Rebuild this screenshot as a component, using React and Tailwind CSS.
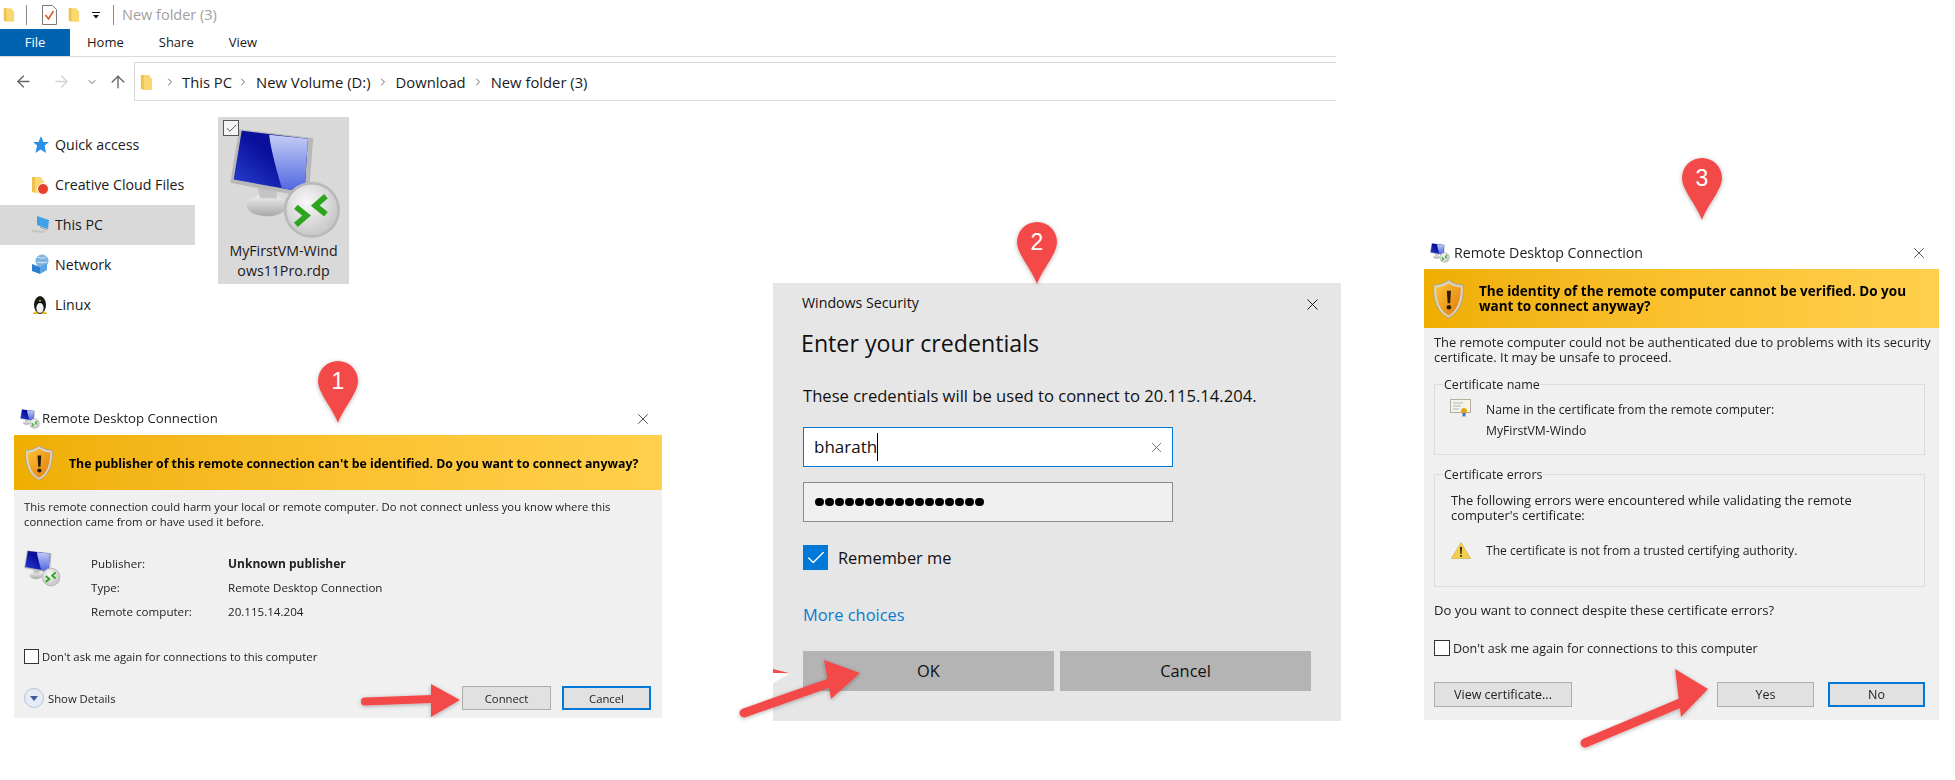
import { X, Check, ArrowLeft, ArrowRight, ArrowUp, ChevronDown, ChevronRight } from 'lucide-react';

function Folder({ className }) {
  return (
    <svg className={className} viewBox="0 0 14 18">
      <path d="M1 1h8l2 1v2l2 .5V17H4l-3-1z" fill="#f9d872" />
      <path d="M1 1h3v15H1z" fill="#eec14e" />
    </svg>
  );
}

// remote desktop icon, used big on the file tile and small in the dialogs
function RdpIcon({ className, id }) {
  return (
    <svg className={className} viewBox="95 80 335 335">
      <defs>
        <linearGradient id={`${id}-s`} x1="0" y1="1" x2="1" y2="0">
          <stop offset="0" stopColor="#2a44d4" />
          <stop offset="0.55" stopColor="#0a0f9c" />
          <stop offset="1" stopColor="#0a0f9c" />
        </linearGradient>
        <linearGradient id={`${id}-h`} x1="0" y1="0" x2="0" y2="1">
          <stop offset="0" stopColor="#c3cdf6" />
          <stop offset="1" stopColor="#4e63e0" />
        </linearGradient>
        <radialGradient id={`${id}-b`} cx="0.4" cy="0.35" r="0.8">
          <stop offset="0" stopColor="#f9f9f9" />
          <stop offset="1" stopColor="#bdbdbd" />
        </radialGradient>
        <linearGradient id={`${id}-st`} x1="0" y1="0" x2="0" y2="1">
          <stop offset="0" stopColor="#efefef" />
          <stop offset="1" stopColor="#a8a8a8" />
        </linearGradient>
      </defs>
      <ellipse cx="205" cy="312" rx="60" ry="32" fill={`url(#${id}-st)`} />
      <path d="M175 250l60 8 0 32-50 0z" fill="#c4c4c4" />
      <path d="M122 84l222 26-14 178-234-44z" fill="#b8b8b8" />
      <path d="M130 88l198 24-10 160-212-38z" fill={`url(#${id}-s)`} />
      <path d="M212 100l116 12-10 160-68-12c-14-50-32-110-38-160z" fill={`url(#${id}-h)`} />
      <circle cx="340" cy="325" r="84" fill="#b9b9b9" />
      <circle cx="340" cy="325" r="76" fill={`url(#${id}-b)`} />
      <path d="M292 316l32 26-32 28" fill="none" stroke="#2ea51f" strokeWidth="17" />
      <path d="M382 284l-32 28 32 26" fill="none" stroke="#2ea51f" strokeWidth="17" />
    </svg>
  );
}

function Shield({ className, id }) {
  return (
    <svg className={className} viewBox="0 0 40 48">
      <defs>
        <linearGradient id={id} x1="0" y1="0" x2="1" y2="1">
          <stop offset="0" stopColor="#ffc436" />
          <stop offset="1" stopColor="#e07a0c" />
        </linearGradient>
      </defs>
      <path d="M20 1C15 5 8 7 2 7c-1 18 4 33 18 40 14-7 19-22 18-40-6 0-13-2-18-6z" fill="#d9d3c2" stroke="#a59a80" />
      <path d="M20 5C16 8 10 10 5 10c0 15 4 28 15 34 11-6 15-19 15-34-5 0-11-2-15-5z" fill={`url(#${id})`} />
      <path d="M18 14h5l-1 15h-3z" fill="#2b1a05" />
      <circle cx="20.5" cy="34" r="2.8" fill="#2b1a05" />
    </svg>
  );
}

function CertIcon() {
  return (
    <svg className="w-[21px] h-[18px]" viewBox="0 0 21 18">
      <rect x="0.5" y="0.5" width="20" height="13" fill="#f7f3e6" stroke="#b3ae9f" />
      <path d="M3 4h10M3 7h8M3 10h6" stroke="#a9b6c9" />
      <circle cx="14" cy="12" r="3" fill="#e5a416" />
      <path d="M12.5 14v4l1.5-1 1.5 1v-4" fill="#3b74c9" />
    </svg>
  );
}

function WarnIcon() {
  return (
    <svg className="w-[20px] h-[17px]" viewBox="0 0 20 17">
      <path d="M10 .5L19.5 16.5H.5z" fill="#f3cf4a" stroke="#c9a83a" strokeWidth="0.6" />
      <path d="M9 5h2l-.4 7H9.4z" fill="#222" />
      <circle cx="10" cy="14" r="1" fill="#222" />
    </svg>
  );
}

function DlgButton({ label, primary, className }) {
  return (
    <div className={`flex items-center justify-center bg-[#e1e1e1] ${primary ? 'border-2 border-[#0078d7]' : 'border border-[#adadad]'} ${className}`}>
      {label}
    </div>
  );
}

const navItems = [
  { label: 'Quick access', icon: (
    <svg className="w-[18px] h-[18px]" viewBox="0 0 18 18"><path d="M10 0l2.4 6H18l-4.4 3.6L15 17l-5.4-3.6L4.5 17l1.6-7.4L2 6h5.6z" fill="#2b8fe3" /></svg>
  ) },
  { label: 'Creative Cloud Files', icon: (
    <div className="relative w-[18px] h-[20px]">
      <Folder className="w-[14px] h-[20px]" />
      <div className="absolute right-0 bottom-0 w-[12px] h-[12px] rounded-full bg-[#e8402f] border border-white" />
    </div>
  ) },
  { label: 'This PC', active: true, icon: (
    <svg className="w-[20px] h-[20px]" viewBox="0 0 20 20">
      <path d="M6 1l12 4-1 9-11-4z" fill="#3fa2e8" />
      <path d="M1 16l13 1" stroke="#c4c4c4" strokeWidth="2" />
      <path d="M9 12l7 3" stroke="#9a9a9a" />
    </svg>
  ) },
  { label: 'Network', icon: (
    <svg className="w-[20px] h-[22px]" viewBox="0 0 20 22">
      <circle cx="11" cy="7" r="6.5" fill="#7fb2dc" />
      <path d="M7 3c3 2 6 1 8 0M6 8c4 1 7 1 10 0" stroke="#e3eef7" fill="none" />
      <path d="M1 10l8 3v7l-8-3z" fill="#2b7fd1" />
      <path d="M9 13l7-4v7l-7 4z" fill="#5aa5e6" />
    </svg>
  ) },
  { label: 'Linux', icon: (
    <svg className="w-[18px] h-[20px]" viewBox="0 0 18 20">
      <ellipse cx="9" cy="10" rx="6" ry="9" fill="#1a1a1a" />
      <ellipse cx="9" cy="13" rx="3.6" ry="5" fill="#f4f4f4" />
      <path d="M7.5 5h3L9 7z" fill="#e8b320" />
      <path d="M2 18l4-2 1 3H2zM16 18l-4-2-1 3h5z" fill="#e8b320" />
    </svg>
  ) },
];

function Explorer() {
  return (
    <div className="w-[1336px] text-[#1a1a1a]">
      <div className="h-[29px] flex items-center">
        <Folder className="ml-[3px] w-[12px] h-[18px]" />
        <div className="ml-[11px] w-px h-[20px] bg-[#8a8a8a]" />
        <svg className="ml-[15px] w-[15px] h-[20px]" viewBox="0 0 15 20">
          <path d="M.5.5h10l4 4v15H.5z" fill="#fff" stroke="#7a7a7a" />
          <path d="M3.5 10l3 4 5-8" stroke="#d9541e" strokeWidth="1.5" fill="none" />
        </svg>
        <Folder className="ml-[11px] w-[12px] h-[18px]" />
        <svg className="ml-[12px] w-[8px] h-[8px]" viewBox="0 0 8 8">
          <path d="M0 1h8v1H0zM1 4h6L4 7.5z" fill="#111" />
        </svg>
        <div className="ml-[13px] w-px h-[20px] bg-[#8a8a8a]" />
        <span className="ml-[8px] text-[14.5px] text-[#a0a0a0]">New folder (3)</span>
      </div>
      <div className="h-[28px] flex items-stretch border-b border-[#dadbdc] text-[13px]">
        <div className="w-[70px] bg-[#0063b1] text-white flex items-center justify-center">File</div>
        <div className="ml-[17px] flex items-center">Home</div>
        <div className="ml-[35px] flex items-center">Share</div>
        <div className="ml-[35px] flex items-center">View</div>
      </div>
      <div className="h-[52px] pt-[5px] flex items-start">
        <div className="w-[134px] h-[39px] flex items-center text-[#666]">
          <ArrowLeft className="ml-[14px] w-[19px] h-[19px]" strokeWidth={1.6} />
          <ArrowRight className="ml-[19px] w-[19px] h-[19px] text-[#d4d4d4]" strokeWidth={1.6} />
          <ChevronDown className="ml-[15px] w-[12px] h-[12px]" strokeWidth={2} />
          <ArrowUp className="ml-[10px] w-[20px] h-[20px]" strokeWidth={1.6} />
        </div>
        <div className="flex-1 h-[39px] pt-[1px] border border-r-0 border-[#d9d9d9] flex items-center pl-[5px] text-[14.8px]">
          <Folder className="w-[13px] h-[19px]" />
          <ChevronRight className="ml-[11px] w-[12px] h-[12px] text-[#666]" />
          <span className="ml-[6px]">This PC</span>
          <ChevronRight className="ml-[5px] w-[12px] h-[12px] text-[#666]" />
          <span className="ml-[7px]">New Volume (D:)</span>
          <ChevronRight className="ml-[6px] w-[12px] h-[12px] text-[#666]" />
          <span className="ml-[7px]">Download</span>
          <ChevronRight className="ml-[6px] w-[12px] h-[12px] text-[#666]" />
          <span className="ml-[7px]">New folder (3)</span>
        </div>
      </div>
      <div className="flex">
        <div className="w-[195px] pt-[16px] text-[14.2px]">
          {navItems.map(item => (
            <div key={item.label} className={`h-[40px] flex items-center ${item.active ? 'bg-[#d9d9d9]' : ''}`}>
              <div className="w-[55px] pl-[31px] flex items-center">{item.icon}</div>
              <span>{item.label}</span>
            </div>
          ))}
        </div>
        <div className="ml-[23px] mt-[8px] relative w-[131px] h-[167px] bg-[#d9d9d9] flex flex-col items-center text-[14.2px] leading-[20px]">
          <RdpIcon className="mt-[11px] ml-[5px] w-[112px] h-[112px]" id="rdp-big" />
          <div className="absolute left-[5px] top-[3px] w-[16px] h-[16px] border border-[#555] bg-white/70 flex items-center justify-center">
            <Check className="w-[13px] h-[13px] text-[#333]" strokeWidth={1.5} />
          </div>
          <div className="text-center mt-[1px]">MyFirstVM-Wind<br />ows11Pro.rdp</div>
        </div>
      </div>
    </div>
  );
}

function PublisherDialog() {
  return (
    <div className="absolute left-[14px] top-[402px] w-[648px] text-[11.3px] text-[#222] blur-[0.4px]">
      <div className="h-[33px] bg-white flex items-center">
        <RdpIcon className="ml-[6px] w-[20px] h-[20px]" id="rdp-t1" />
        <span className="ml-[2px] text-[13.2px]">Remote Desktop Connection</span>
        <X className="ml-auto mr-[10px] w-[18px] h-[18px]" strokeWidth={1} />
      </div>
      <div className="h-[55px] bg-gradient-to-r from-[#efae00] via-[#fbc12e] to-[#ffd04d] flex items-center">
        <Shield className="ml-[10px] w-[30px] h-[38px]" id="sh1" />
        <span className="ml-[15px] pt-[3px] text-[12.3px] font-bold text-black whitespace-nowrap">The publisher of this remote connection can't be identified. Do you want to connect anyway?</span>
      </div>
      <div className="h-[228px] bg-[#f0f0f0] px-[10px] pt-[9px] leading-[15px]">
        <p>This remote connection could harm your local or remote computer. Do not connect unless you know where this<br />connection came from or have used it before.</p>
        <div className="mt-[23px] flex text-[11.6px]">
          <RdpIcon className="mt-[-2px] w-[37px] h-[37px]" id="rdp-m1" />
          <div className="ml-[30px] w-[137px] leading-[24px]">
            <div>Publisher:</div>
            <div>Type:</div>
            <div>Remote computer:</div>
          </div>
          <div className="leading-[24px]">
            <div className="font-bold text-[12px]">Unknown publisher</div>
            <div>Remote Desktop Connection</div>
            <div>20.115.14.204</div>
          </div>
        </div>
        <div className="mt-[24px] h-[16px] flex items-center">
          <div className="w-[15px] h-[15px] border border-[#333] bg-white" />
          <span className="ml-[3px]">Don't ask me again for connections to this computer</span>
        </div>
        <div className="mt-[22px] pr-[1px] flex items-center">
          <div className="w-[20px] h-[20px] rounded-full border border-[#b6c2d8] bg-[#e6ecf6] flex items-center justify-center">
            <div className="w-0 h-0 border-x-[4px] border-x-transparent border-t-[5px] border-t-[#3a5a98]" />
          </div>
          <span className="ml-[4px]">Show Details</span>
          <DlgButton label="Connect" className="ml-auto w-[89px] h-[24px]" />
          <DlgButton label="Cancel" primary className="ml-[11px] w-[89px] h-[24px]" />
        </div>
      </div>
    </div>
  );
}

function CredentialsDialog() {
  return (
    <div className="absolute left-[773px] top-[283px] w-[568px] h-[438px] bg-[#e6e6e6] pl-[30px] pr-[30px] text-[#111]">
      <X className="absolute right-[19px] top-[12px] w-[19px] h-[19px]" strokeWidth={1.2} />
      <div className="pt-[10px] ml-[-1px] text-[14.2px] leading-[20px]">Windows Security</div>
      <h2 className="mt-[14px] ml-[-2px] text-[23.2px] leading-[32px]">Enter your credentials</h2>
      <p className="mt-[25px] text-[16.6px] leading-[24px]">These credentials will be used to connect to 20.115.14.204.</p>
      <div className="mt-[19px] w-[370px] h-[40px] bg-white border border-[#0078d7] flex items-center pl-[10px] text-[17px]">
        <span>bharath</span>
        <div className="w-px h-[28px] bg-black" />
        <X className="ml-auto mr-[7px] w-[17px] h-[17px] text-[#444]" strokeWidth={1} />
      </div>
      <div className="mt-[15px] w-[370px] h-[40px] bg-[#f0f0f0] border border-[#8a8a8a] flex items-center pl-[11px]">
        {Array.from({ length: 17 }).map((_, i) => (
          <div key={i} className="w-[8.5px] h-[8.5px] rounded-full bg-black mr-[1.5px]" />
        ))}
      </div>
      <div className="mt-[23px] flex items-center">
        <div className="w-[25px] h-[25px] bg-[#0078d7] flex items-center justify-center">
          <Check className="w-[22px] h-[22px] text-white" strokeWidth={1.5} />
        </div>
        <span className="ml-[10px] pt-[1px] text-[16.4px]">Remember me</span>
      </div>
      <div className="mt-[32px] text-[16.4px] leading-[24px] text-[#0a7ad0]">More choices</div>
      <div className="mt-[24px] flex gap-[6px] text-[16.4px]">
        <div className="w-[251px] h-[40px] pt-[2px] bg-[#b4b4b4] flex items-center justify-center">OK</div>
        <div className="w-[251px] h-[40px] pt-[2px] bg-[#b4b4b4] flex items-center justify-center">Cancel</div>
      </div>
    </div>
  );
}

function CertificateDialog() {
  return (
    <div className="absolute left-[1424px] top-[236px] w-[515px] text-[12.5px] text-[#222] blur-[0.25px]">
      <div className="h-[33px] bg-white flex items-center">
        <RdpIcon className="ml-[6px] w-[20px] h-[20px]" id="rdp-t3" />
        <span className="ml-[4px] text-[14.2px]">Remote Desktop Connection</span>
        <X className="ml-auto mr-[11px] w-[18px] h-[18px]" strokeWidth={1} />
      </div>
      <div className="h-[59px] bg-gradient-to-r from-[#efae00] via-[#fbc12e] to-[#ffd04d] flex items-center">
        <Shield className="ml-[8px] w-[33px] h-[40px]" id="sh3" />
        <span className="ml-[14px] font-bold text-black leading-[15px] text-[13.5px]">The identity of the remote computer cannot be verified. Do you<br />want to connect anyway?</span>
      </div>
      <div className="h-[392px] bg-[#f0f0f0] pl-[10px] pr-[14px] pt-[7px] leading-[15px]">
        <p className="text-[12.9px] whitespace-nowrap">The remote computer could not be authenticated due to problems with its security<br />certificate. It may be unsafe to proceed.</p>
        <fieldset className="mt-[12px] h-[78px] border border-[#dcdcdc] pl-[15px]">
          <legend className="ml-[-7px] px-[1px]">Certificate name</legend>
          <div className="mt-[7px] flex">
            <CertIcon />
            <div className="ml-[15px] leading-[21px] text-[12.2px]">Name in the certificate from the remote computer:<br />MyFirstVM-Windo</div>
          </div>
        </fieldset>
        <fieldset className="mt-[12px] h-[120px] border border-[#dcdcdc] pl-[16px]">
          <legend className="ml-[-8px] px-[1px]">Certificate errors</legend>
          <p className="mt-[11px] text-[12.9px]">The following errors were encountered while validating the remote<br />computer's certificate:</p>
          <div className="mt-[19px] flex items-center">
            <WarnIcon />
            <span className="ml-[15px] text-[12.1px]">The certificate is not from a trusted certifying authority.</span>
          </div>
        </fieldset>
        <p className="mt-[16px] text-[13.1px]">Do you want to connect despite these certificate errors?</p>
        <div className="mt-[22px] flex items-center">
          <div className="w-[16px] h-[16px] border border-[#333] bg-white" />
          <span className="ml-[3px]">Don't ask me again for connections to this computer</span>
        </div>
        <div className="mt-[26px] flex">
          <DlgButton label="View certificate..." className="w-[138px] h-[25px]" />
          <DlgButton label="Yes" className="ml-auto w-[97px] h-[25px]" />
          <DlgButton label="No" primary className="ml-[14px] w-[97px] h-[25px]" />
        </div>
      </div>
    </div>
  );
}

// numbered pins and red arrows drawn over the windows
function Annotations() {
  const pins = [
    { n: 1, x: 338, y: 361 },
    { n: 2, x: 1037, y: 222 },
    { n: 3, x: 1702, y: 158 },
  ];
  return (
    <svg className="absolute left-0 top-0 w-[1955px] h-[780px] pointer-events-none" viewBox="0 0 1955 780">
      <defs>
        <filter id="pin-shadow" x="-30%" y="-30%" width="160%" height="160%">
          <feDropShadow dx="0" dy="1" stdDeviation="2" floodColor="#000" floodOpacity="0.3" />
        </filter>
      </defs>
      <path d="M773 671l16 3-16 9z" fill="#fff" />
      <path d="M773 669l16 4-16 0z" fill="#f44a4a" />
      <g fill="#f44a4a" filter="url(#pin-shadow)">
        <path d="M365 701.5L432 699" stroke="#f44a4a" strokeWidth="8" strokeLinecap="round" />
        <path d="M431 684l29 16-29 17z" />
        <path d="M744 713L835 681" stroke="#f44a4a" strokeWidth="9" strokeLinecap="round" />
        <path d="M824 660l36 13-29 26z" />
        <path d="M1585 743L1690 699" stroke="#f44a4a" strokeWidth="9" strokeLinecap="round" />
        <path d="M1675 669l33 20-27 28z" />
        {pins.map(p => (
          <path key={p.n} d={`M${p.x} ${p.y + 62}C${p.x - 6} ${p.y + 46} ${p.x - 20} ${p.y + 32} ${p.x - 20} ${p.y + 20}A20 20 0 0 1 ${p.x + 20} ${p.y + 20}C${p.x + 20} ${p.y + 32} ${p.x + 6} ${p.y + 46} ${p.x} ${p.y + 62}z`} />
        ))}
      </g>
      {pins.map(p => (
        <text key={p.n} x={p.x} y={p.y + 28} textAnchor="middle" fontSize="23" fontFamily="Liberation Sans, sans-serif" fill="#fff">{p.n}</text>
      ))}
    </svg>
  );
}

export default function App() {
  return (
    <div className="relative w-[1955px] h-[780px] overflow-hidden bg-white font-['Open_Sans','Noto_Sans',sans-serif]">
      <Explorer />
      <PublisherDialog />
      <CredentialsDialog />
      <CertificateDialog />
      <Annotations />
    </div>
  );
}
